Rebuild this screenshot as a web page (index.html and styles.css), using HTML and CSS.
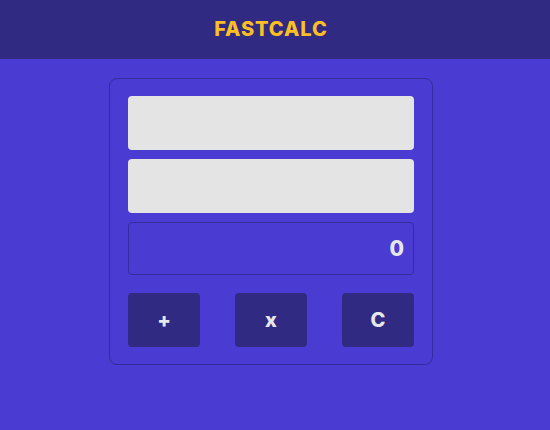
FILE: index.html
```html
<!DOCTYPE html>
<html>
<head>
<meta charset="utf-8">
<link rel="stylesheet" href="styles.css">
</head>
<body>
<header class="header"><h1 class="title">FASTCALC</h1></header>
<main class="main">
  <div class="card">
    <input class="field" type="text">
    <input class="field" type="text">
    <div class="display">0</div>
    <div class="buttons">
      <button class="btn">+</button>
      <button class="btn">x</button>
      <button class="btn">C</button>
    </div>
  </div>
</main>
</body>
</html>
```
FILE: styles.css
```css
* { box-sizing: border-box; }
html, body { margin: 0; padding: 0; }
body {
  background: #4a3bd2;
  font-family: Inter, "Noto Sans", sans-serif;
  width: 550px;
  height: 430px;
  overflow: hidden;
}
.header {
  height: 59px;
  background: #312a82;
  display: flex;
  align-items: center;
  justify-content: center;
  padding: 0 8px 2px 0;
}
.title {
  margin: 0;
  color: #fbbf24;
  font-size: 20px;
  font-weight: 800;
  letter-spacing: 0.9px;
}
.main {
  display: flex;
  justify-content: center;
  padding-top: 19px;
}
.card {
  width: 324px;
  margin-left: -8px;
  border: 1px solid #362c9e;
  border-radius: 8px;
  padding: 17px 18px;
  display: flex;
  flex-direction: column;
}
.field {
  height: 54px;
  border: none;
  border-radius: 4px;
  background: #e4e4e4;
  margin: 0 0 9px 0;
  outline: none;
}
.display {
  height: 53px;
  border: 1px solid #362c9e;
  border-radius: 4px;
  color: #e5e7eb;
  font-weight: 800;
  font-size: 21px;
  display: flex;
  align-items: center;
  justify-content: flex-end;
  padding-right: 9px;
}
.buttons {
  margin-top: 18px;
  display: flex;
  justify-content: space-between;
}
.btn {
  width: 72px;
  height: 54px;
  border: none;
  border-radius: 4px;
  background: #312a82;
  color: #e5e7eb;
  font-family: Inter, sans-serif;
  font-weight: 800;
  font-size: 20px;
  padding: 0;
}
```
